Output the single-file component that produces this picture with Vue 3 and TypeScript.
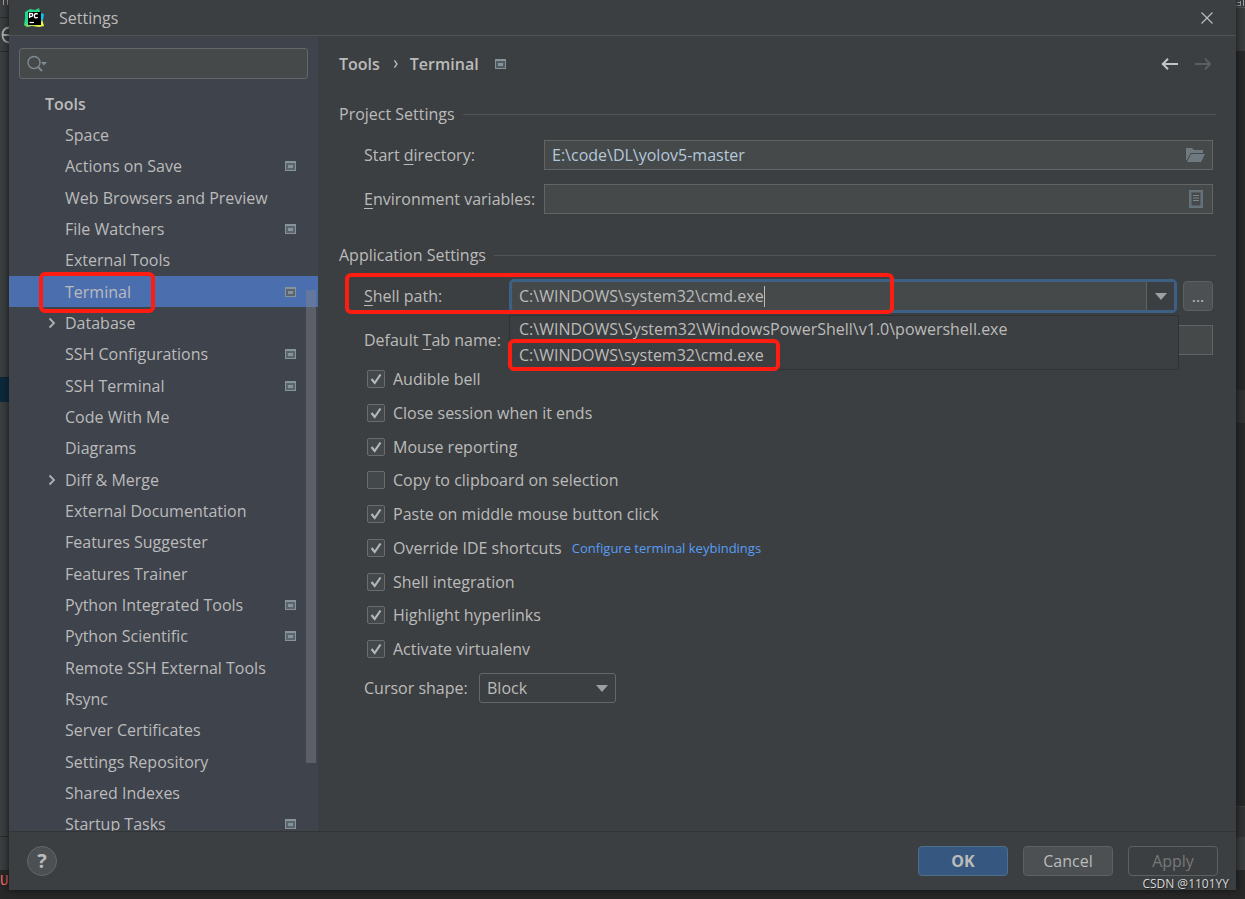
<script setup lang="ts">
import { ref } from 'vue'

interface TreeItem {
  label: string
  project?: boolean
  expandable?: boolean
}

interface Option {
  label: string
  checked: boolean
  link?: string
}

const items: TreeItem[] = [
  { label: 'Space' },
  { label: 'Actions on Save', project: true },
  { label: 'Web Browsers and Preview' },
  { label: 'File Watchers', project: true },
  { label: 'External Tools' },
  { label: 'Terminal', project: true },
  { label: 'Database', expandable: true },
  { label: 'SSH Configurations', project: true },
  { label: 'SSH Terminal', project: true },
  { label: 'Code With Me' },
  { label: 'Diagrams' },
  { label: 'Diff & Merge', expandable: true },
  { label: 'External Documentation' },
  { label: 'Features Suggester' },
  { label: 'Features Trainer' },
  { label: 'Python Integrated Tools', project: true },
  { label: 'Python Scientific', project: true },
  { label: 'Remote SSH External Tools' },
  { label: 'Rsync' },
  { label: 'Server Certificates' },
  { label: 'Settings Repository' },
  { label: 'Shared Indexes' },
  { label: 'Startup Tasks', project: true },
]

const selected = ref('Terminal')
const search = ref('')
const startDirectory = ref('E:\\code\\DL\\yolov5-master')
const environment = ref('')
const shellPath = ref('C:\\WINDOWS\\system32\\cmd.exe')
const tabName = ref('')
const cursorShape = ref('Block')
const shells: string[] = [
  'C:\\WINDOWS\\System32\\WindowsPowerShell\\v1.0\\powershell.exe',
  'C:\\WINDOWS\\system32\\cmd.exe',
]

const options = ref<Option[]>([
  { label: 'Audible bell', checked: true },
  { label: 'Close session when it ends', checked: true },
  { label: 'Mouse reporting', checked: true },
  { label: 'Copy to clipboard on selection', checked: false },
  { label: 'Paste on middle mouse button click', checked: true },
  { label: 'Override IDE shortcuts', checked: true, link: 'Configure terminal keybindings' },
  { label: 'Shell integration', checked: true },
  { label: 'Highlight hyperlinks', checked: true },
  { label: 'Activate virtualenv', checked: true },
])
</script>

<template>
  <div class="desktop">
    <div class="edge edge-left" aria-hidden="true">
      <div class="e-top"><svg viewBox="0 0 9 5" width="9" height="5"><path d="M3.500 0v5M7.500 0v5" stroke="#a9a39c" /></svg></div>
      <div class="e-bar"><svg viewBox="0 0 9 18" width="9" height="18"><path d="M9 1.500C5 2 2.500 5 2.500 9S5 16 9 16.500M3 9h6" fill="none" stroke="#afb1b3" stroke-width="1.800" /></svg></div>
      <div class="e-tree"></div>
      <div class="e-sel"></div>
      <div class="e-fill"></div>
      <div class="e-tab"></div>
      <div class="e-code"><span>U</span></div>
    </div>

    <main class="window">
      <header class="titlebar">
        <svg class="logo" viewBox="0 0 20 20" width="20" height="20" aria-hidden="true">
          <defs>
            <linearGradient id="pc" x1="0" y1="0" x2="1" y2="1">
              <stop offset="0.4" stop-color="#21d789" />
              <stop offset="0.75" stop-color="#d8f04a" />
              <stop offset="1" stop-color="#fcf84a" />
            </linearGradient>
          </defs>
          <path d="M1 4 6 1l5 1 4-2 1 4 3 3-1 4 2 7-5 1-7-1-5 1-3-2 1-7z" fill="url(#pc)" />
          <path d="m17 5 3 1-1 6-2 1z" fill="#07c3f2" />
          <rect x="4" y="4" width="13" height="13" fill="#000" />
          <path d="M5.500 10V5.500h1.700q1.600 0 1.600 1.500T7.200 8.500H5.500M13.700 6.200q-.7-.7-1.500-.7-1.800 0-1.800 2.200t1.800 2.200q.9 0 1.500-.7" fill="none" stroke="#fff" stroke-width="1.300" />
          <path d="M5.500 14.500h4.500" stroke="#fff" stroke-width="1.200" />
        </svg>
        <h1>Settings</h1>
        <button class="plain close" aria-label="Close">
          <svg viewBox="0 0 12 12" width="12" height="12"><path d="m.5.5 11 11m0-11-11 11" stroke="#bbb" stroke-width="1.200" /></svg>
        </button>
      </header>

      <div class="body">
        <aside class="sidebar">
          <label class="search">
            <svg viewBox="0 0 22 18" width="22" height="18" aria-hidden="true">
              <circle cx="8" cy="7.500" r="6" fill="none" stroke="#7f8b91" stroke-width="1.400" />
              <path d="m12 12 4 4" stroke="#7f8b91" stroke-width="1.800" />
              <path d="M15 7h6l-3 3.500z" fill="#7f8b91" />
            </svg>
            <input v-model="search" type="text" aria-label="Search settings" />
          </label>
          <nav class="tree">
            <ul>
              <li class="group">Tools</li>
              <li v-for="item in items" :key="item.label" :class="{ active: item.label === selected }">
                <button class="plain row" @click="selected = item.label">
                  <svg v-if="item.expandable" class="chevron" viewBox="0 0 8 12" width="8" height="12"><path d="m1.500 1.500 4.500 4.500-4.500 4.500" fill="none" stroke="#afb1b3" stroke-width="1.800" /></svg>
                  <span>{{ item.label }}</span>
                  <svg v-if="item.project" viewBox="0 0 11 10" width="11" height="10"><path d="M0 0h11v10H0zM1 2v7h9V2z" fill="#87939a" fill-rule="evenodd" /><path d="M1 2h9v7H1z" fill="#5a646c" /><path d="M3 4h5v3H3z" fill="#87939a" /></svg>
                </button>
              </li>
            </ul>
            <div class="thumb"></div>
          </nav>
          <div class="mark mark-terminal"></div>
        </aside>

        <section class="content">
          <div class="crumbs">
            <strong>Tools</strong>
            <svg class="crumb-arrow" viewBox="0 0 4 8" width="4" height="8"><path d="m.5.5 2.500 3.500L.5 7.500" fill="none" stroke="#bbb" stroke-width="1.300" /></svg>
            <strong>Terminal</strong>
            <svg class="crumb-icon" viewBox="0 0 11 10" width="11" height="10"><path d="M0 0h11v10H0z" fill="#87939a" /><path d="M1 2h9v7H1z" fill="#505a60" /><path d="M3 4h5v3H3z" fill="#87939a" /></svg>
            <div class="history">
              <button class="plain" aria-label="Back"><svg viewBox="0 0 17 12" width="17" height="12"><path d="M17 6H2M7 .8 1.800 6 7 11.200" fill="none" stroke="#c4c4c4" stroke-width="2" /></svg></button>
              <button class="plain" aria-label="Forward" disabled><svg viewBox="0 0 17 12" width="17" height="12"><path d="M0 6h15M10 .8 15.200 6 10 11.200" fill="none" stroke="#5c5e60" stroke-width="2" /></svg></button>
            </div>
          </div>

          <h2>Project Settings</h2>
          <div class="field-row project-row">
            <label for="start">Start <u>d</u>irectory:</label>
            <div class="field">
              <input id="start" v-model="startDirectory" type="text" />
              <svg viewBox="0 0 19 14" width="19" height="14" aria-hidden="true"><path d="M0 0h6l2 2h9v3H4.500L1 12H0z" fill="#6e7a80" /><path d="M5 6h14l-4 8H1z" fill="#6e7a80" /></svg>
            </div>
          </div>
          <div class="field-row project-row">
            <label for="env"><u>E</u>nvironment variables:</label>
            <div class="field">
              <input id="env" v-model="environment" type="text" />
              <svg class="doc" viewBox="0 0 14 18" width="14" height="18" aria-hidden="true"><path d="M0 0h14v18H0zM2.500 2.500v13h9v-13z" fill="#65727a" fill-rule="evenodd" /><path d="M4 5.500h6M4 8h6M4 10.500h6" stroke="#7b868c" /></svg>
            </div>
          </div>

          <h2 class="second">Application Settings</h2>
          <div class="shell-area">
            <div class="field-row shell-row">
              <label for="shell"><u>S</u>hell path:</label>
              <div class="combo">
                <div class="combo-text">
                  <input id="shell" v-model="shellPath" type="text" />
                  <i class="caret"></i>
                </div>
                <button class="plain drop" aria-label="Show shells"><svg viewBox="0 0 12 7" width="12" height="7"><path d="M0 0h12L6 7z" fill="#9da0a2" /></svg></button>
              </div>
              <button class="btn browse" aria-label="Browse">...</button>
            </div>
            <div class="field-row tab-row">
              <label for="tab">Default <u>T</u>ab name:</label>
              <div class="field"><input id="tab" v-model="tabName" type="text" /></div>
            </div>
            <ul class="popup">
              <li v-for="shell in shells" :key="shell">{{ shell }}</li>
            </ul>
            <div class="mark mark-shell"></div>
            <div class="mark mark-cmd"></div>
          </div>

          <div class="options">
            <div v-for="option in options" :key="option.label" class="option">
              <label>
                <input v-model="option.checked" type="checkbox" />
                <span class="box"><svg v-if="option.checked" viewBox="0 0 12 12" width="12" height="12"><path d="m1.500 6 3.200 4L10.500 1.500" fill="none" stroke="#b4b6b8" stroke-width="2.200" /></svg></span>
                <span>{{ option.label }}</span>
              </label>
              <a v-if="option.link" href="#">{{ option.link }}</a>
            </div>
          </div>

          <div class="cursor-row">
            <label for="cursor">Cursor shape:</label>
            <div class="select">
              <select id="cursor" v-model="cursorShape">
                <option>Block</option>
                <option>Underline</option>
                <option>Vertical</option>
              </select>
              <svg viewBox="0 0 12 7" width="12" height="7" aria-hidden="true"><path d="M0 0h12L6 7z" fill="#9da0a2" /></svg>
            </div>
          </div>
        </section>
      </div>

      <footer class="footer">
        <button class="help" aria-label="Help">?</button>
        <div class="actions">
          <button class="btn primary">OK</button>
          <button class="btn">Cancel</button>
          <button class="btn off" disabled>Apply</button>
        </div>
      </footer>
    </main>

    <div class="edge edge-right" aria-hidden="true">
      <div class="r-top"><svg viewBox="0 0 9 6" width="9" height="6"><path d="M0 5.500h4M4.500 1v5M1 2.500h3M7.500 0v6" stroke="#9aa3ab" /></svg></div>
      <div class="r-bar"></div>
      <div class="r-code"></div>
      <div class="r-line"></div>
      <div class="r-code r-lower"></div>
      <div class="r-pane"></div>
      <div class="r-tab"></div>
      <div class="r-end"></div>
    </div>
    <div class="watermark">CSDN @1101YY</div>
  </div>
</template>

<style>
body {
  background: #282828;
}
</style>

<style scoped>
* {
  box-sizing: border-box;
}
.desktop {
  position: relative;
  display: grid;
  grid-template-columns: 9px 1fr 9px;
  height: 100vh;
  background: #282828;
  color: #bbbbbb;
  font: 16px/22px "Open Sans", "Noto Sans", sans-serif;
  overflow: hidden;
}
input,
select,
button {
  font: inherit;
  color: inherit;
}
svg {
  display: block;
  flex: none;
}
ul {
  list-style: none;
  margin: 0;
  padding: 0;
}
strong {
  font-weight: 600;
}
.plain {
  border: 0;
  padding: 0;
  background: none;
}
.window {
  display: flex;
  flex-direction: column;
  min-width: 0;
  margin-bottom: 9px;
  background: #3c3f41;
  box-shadow: 0 0 8px #111;
  z-index: 1;
}
.titlebar {
  display: flex;
  align-items: center;
  height: 36px;
  padding: 0 23px 0 15px;
  border-bottom: 1px solid #515355;
}
.titlebar h1 {
  margin: 0 auto 0 15px;
  font-size: 16px;
  font-weight: 400;
}
.body {
  display: flex;
  flex: 1;
  min-height: 0;
}
.sidebar {
  position: relative;
  display: flex;
  flex-direction: column;
  width: 309px;
  background: #3f434c;
}
.search {
  display: flex;
  align-items: center;
  height: 31px;
  margin: 12px 10px 9px;
  padding-left: 6px;
  border: 1px solid #646668;
  border-radius: 3px;
  background: #45494a;
}
.search input {
  flex: 1;
  min-width: 0;
  border: 0;
  outline: 0;
  background: none;
}
.tree {
  position: relative;
  flex: 1;
  min-height: 0;
  overflow: hidden;
}
.tree ul {
  display: grid;
  grid-auto-rows: 1fr;
  height: calc(100% + 9px);
}
.tree li {
  display: flex;
  align-items: center;
  min-height: 0;
}
.group {
  padding-left: 36px;
  font-weight: 600;
}
.row {
  position: relative;
  display: flex;
  flex: 1;
  align-items: center;
  justify-content: space-between;
  padding: 0 22px 0 56px;
  text-align: left;
}
.chevron {
  position: absolute;
  left: 39px;
}
.active {
  background: #4b6eaf;
}
.thumb {
  position: absolute;
  top: 202px;
  right: 2px;
  bottom: 68px;
  width: 10px;
  background: rgba(130, 130, 140, 0.45);
}
.mark {
  position: absolute;
  border: 4px solid #ff1d12;
  border-radius: 6px;
  pointer-events: none;
}
.mark-terminal {
  top: 236px;
  left: 30px;
  width: 116px;
  height: 41px;
}
.content {
  flex: 1;
  min-width: 0;
  padding: 17px 20px 0 21px;
}
.crumbs {
  display: flex;
  align-items: center;
  height: 22px;
}
.crumb-arrow {
  margin: 0 12px 0 14px;
}
.crumb-icon {
  margin-left: 16px;
}
.history {
  display: flex;
  gap: 17px;
  margin-left: auto;
  padding-right: 4px;
}
h2 {
  display: flex;
  align-items: center;
  gap: 8px;
  margin: 28px 0 15px;
  font-size: 16px;
  font-weight: 400;
}
h2::after {
  content: "";
  flex: 1;
  height: 1px;
  background: #515355;
}
h2.second {
  margin: 30px 0 13px;
}
u {
  text-decoration: underline;
  text-underline-offset: 3px;
}
.field-row {
  display: flex;
  align-items: center;
  padding-left: 25px;
}
.project-row {
  margin-right: 3px;
}
.project-row + .project-row {
  margin-top: 14px;
}
.project-row label {
  width: 180px;
}
.field {
  display: flex;
  flex: 1;
  align-items: center;
  height: 30px;
  padding: 0 7px;
  border: 1px solid #646464;
  background: #45494a;
}
.field input {
  flex: 1;
  min-width: 0;
  padding: 0;
  border: 0;
  outline: 0;
  background: none;
}
.doc {
  margin-right: 2px;
}
#start {
  color: #b4c8dc;
}
.shell-area {
  position: relative;
}
.shell-row {
  margin-right: 3px;
}
.shell-row label {
  width: 145px;
}
.combo {
  display: flex;
  flex: 1;
  height: 34px;
  border: 3px solid #3d6185;
  border-radius: 5px;
  background: #45494a;
}
.combo-text {
  position: relative;
  display: flex;
  flex: 1;
  min-width: 0;
}
.combo-text input {
  width: 100%;
  padding: 0 0 0 7px;
  border: 0;
  outline: 0;
  background: none;
}
.caret {
  position: absolute;
  top: 4px;
  left: 252px;
  width: 1px;
  height: 21px;
  background: #bbb;
}
.drop {
  display: flex;
  align-items: center;
  justify-content: center;
  width: 28px;
  border-left: 1px solid #646464;
  background: #3c3f41;
}
.btn {
  width: 90px;
  height: 30px;
  padding: 0;
  border: 1px solid #5e6060;
  border-radius: 4px;
  background: #4c5052;
}
.browse {
  width: 30px;
  margin-left: 6px;
}
.tab-row {
  margin: 12px 3px 0 0;
}
.tab-row label {
  width: 148px;
}
.popup {
  position: absolute;
  top: 36px;
  left: 170px;
  right: 37px;
  padding: 0 9px 1px;
  border: 1px solid #323232;
  background: #3c3f41;
  line-height: 26px;
}
.mark-shell {
  top: -6px;
  left: 6px;
  width: 549px;
  height: 41px;
}
.mark-cmd {
  top: 60px;
  left: 169px;
  width: 272px;
  height: 32px;
}
.options {
  display: flex;
  flex-direction: column;
  justify-content: space-between;
  height: 292px;
  margin: 13px 0 0 28px;
}
.option,
.option label {
  display: flex;
  align-items: center;
}
.option label {
  position: relative;
}
.option input {
  position: absolute;
  width: 18px;
  height: 18px;
  margin: 0;
  opacity: 0;
}
.box {
  display: flex;
  align-items: center;
  justify-content: center;
  width: 18px;
  height: 18px;
  margin-right: 8px;
  border: 1px solid #6b6b6b;
  border-radius: 2px;
  background: #43494a;
}
a {
  margin-left: 10px;
  color: #589df6;
  font-size: 13px;
  text-decoration: none;
}
.cursor-row {
  display: flex;
  align-items: center;
  margin: 13px 0 0 25px;
}
.cursor-row label {
  width: 115px;
}
.select {
  position: relative;
  display: flex;
  align-items: center;
}
.select select {
  appearance: none;
  width: 137px;
  height: 30px;
  padding: 0 7px;
  border: 1px solid #646668;
  border-radius: 3px;
  background: #3c3f41;
}
.select svg {
  position: absolute;
  right: 8px;
  pointer-events: none;
}
.footer {
  display: flex;
  align-items: center;
  justify-content: space-between;
  height: 59px;
  padding: 0 18px;
  border-top: 1px solid #323435;
}
.help {
  width: 30px;
  height: 30px;
  padding: 0;
  border: 1px solid #646668;
  border-radius: 50%;
  background: #4c5052;
  font-size: 20px;
  font-weight: 700;
}
.actions {
  display: flex;
  gap: 15px;
}
.primary {
  border-color: #4c708c;
  background: #365880;
  font-weight: 700;
}
.off {
  background: none;
  color: #777;
}
.watermark {
  position: absolute;
  right: 16px;
  bottom: 6px;
  z-index: 2;
  color: #d8d8d8;
  font-size: 12px;
  line-height: 18px;
  text-shadow: 1px 1px 1px #222;
}
.edge {
  display: flex;
  flex-direction: column;
  overflow: hidden;
}
.edge div {
  flex: none;
}
.e-top {
  height: 18px;
  border-bottom: 1px solid #2b2b2b;
  background: #3c3f41;
}
.e-bar {
  display: flex;
  align-items: center;
  height: 34px;
  border-bottom: 1px solid #2b2b2b;
  background: #3c3f41;
}
.e-tree {
  height: 325px;
  background: #3c3f41;
}
.e-sel {
  height: 25px;
  background: #0d293e;
}
.edge .e-fill {
  flex: 1;
  background: #3c3f41;
}
.e-tab {
  height: 34px;
  border-top: 1px solid #2b2b2b;
  background: #3c3f41;
}
.e-code {
  height: 29px;
  color: #ff6b68;
  font: 14px/22px "Liberation Mono", monospace;
}
.r-top {
  height: 8px;
  border-bottom: 1px solid #555;
  background: #3c3f41;
}
.r-bar {
  height: 43px;
  background: #3c3f41;
}
.edge .r-code {
  height: 339px;
}
.r-line {
  height: 33px;
  background: #323232;
}
.edge .r-lower {
  flex: 1;
}
.r-pane {
  height: 31px;
  border-top: 1px solid #3c3f41;
  background: #313335;
}
.r-tab {
  height: 33px;
  background: #3c3f41;
}
.r-end {
  height: 29px;
}
</style>
